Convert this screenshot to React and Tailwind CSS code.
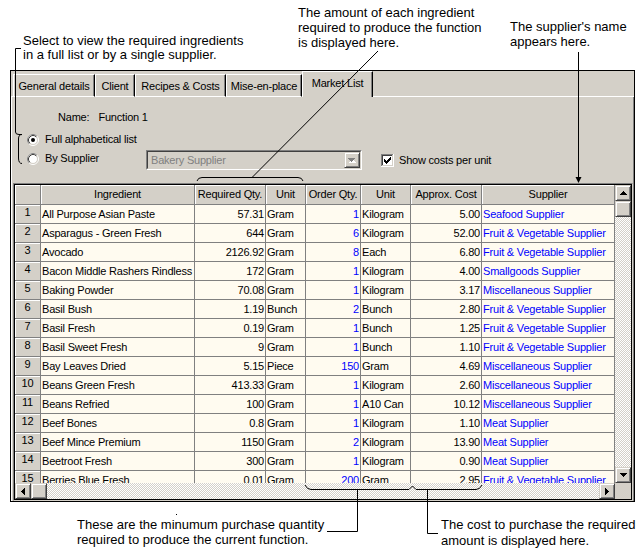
import React from "react";

const rows = [
  [1, "All Purpose Asian Paste", "57.31", "Gram", "1", "Kilogram", "5.00", "Seafood Supplier"],
  [2, "Asparagus - Green Fresh", "644", "Gram", "6", "Kilogram", "52.00", "Fruit & Vegetable Supplier"],
  [3, "Avocado", "2126.92", "Gram", "8", "Each", "6.80", "Fruit & Vegetable Supplier"],
  [4, "Bacon Middle Rashers Rindless", "172", "Gram", "1", "Kilogram", "4.00", "Smallgoods Supplier"],
  [5, "Baking Powder", "70.08", "Gram", "1", "Kilogram", "3.17", "Miscellaneous Supplier"],
  [6, "Basil Bush", "1.19", "Bunch", "2", "Bunch", "2.80", "Fruit & Vegetable Supplier"],
  [7, "Basil Fresh", "0.19", "Gram", "1", "Bunch", "1.25", "Fruit & Vegetable Supplier"],
  [8, "Basil Sweet Fresh", "9", "Gram", "1", "Bunch", "1.10", "Fruit & Vegetable Supplier"],
  [9, "Bay Leaves Dried", "5.15", "Piece", "150", "Gram", "4.69", "Miscellaneous Supplier"],
  [10, "Beans Green Fresh", "413.33", "Gram", "1", "Kilogram", "2.60", "Miscellaneous Supplier"],
  [11, "Beans Refried", "100", "Gram", "1", "A10 Can", "10.12", "Miscellaneous Supplier"],
  [12, "Beef Bones", "0.8", "Gram", "1", "Kilogram", "1.10", "Meat Supplier"],
  [13, "Beef Mince Premium", "1150", "Gram", "2", "Kilogram", "13.90", "Meat Supplier"],
  [14, "Beetroot Fresh", "300", "Gram", "1", "Kilogram", "0.90", "Meat Supplier"],
  [15, "Berries Blue Fresh", "0.01", "Gram", "200", "Gram", "2.95", "Fruit & Vegetable Supplier"],
];

function Arrow({ dir, color = "#000" }) {
  const r = [];
  if (dir === "up" || dir === "down") {
    const spec = [[3, 1], [2, 3], [1, 5], [0, 7]];
    spec.forEach(([x, w], i) => {
      const y = dir === "up" ? i : 3 - i;
      r.push(<rect key={i} x={x} y={y} width={w} height={1} fill={color} />);
    });
    return (
      <svg width="7" height="4" shapeRendering="crispEdges">
        {r}
      </svg>
    );
  }
  const spec = [[3, 1], [2, 3], [1, 5], [0, 7]];
  spec.forEach(([y, h], i) => {
    const x = dir === "left" ? i : 3 - i;
    r.push(<rect key={i} x={x} y={y} width={1} height={h} fill={color} />);
  });
  return (
    <svg width="4" height="7" shapeRendering="crispEdges">
      {r}
    </svg>
  );
}

function Btn({ children }) {
  return (
    <div className="w-[16px] h-[16px] shrink-0 bg-[#d4d0c8] border border-[#d4d0c8] border-r-[#404040] border-b-[#404040] shadow-[inset_1px_1px_#ffffff,inset_-1px_-1px_#808080] flex items-center justify-center">
      {children}
    </div>
  );
}

function Track() {
  return (
    <div className="flex-1 bg-[image:repeating-conic-gradient(#d4d0c8_0_25%,#ffffff_0_50%)] bg-size-[2px_2px]" />
  );
}

function Radio({ checked }) {
  return (
    <svg width="12" height="12" className="shrink-0">
      <circle cx="6" cy="6" r="5.5" fill="none" stroke="#ffffff" />
      <path d="M2.11 9.89 A5.5 5.5 0 0 1 9.89 2.11" fill="none" stroke="#808080" />
      <circle cx="6" cy="6" r="4.5" fill="#ffffff" stroke="#d4d0c8" />
      <path d="M2.82 9.18 A4.5 4.5 0 0 1 9.18 2.82" fill="none" stroke="#404040" />
      {checked && <circle cx="6" cy="6" r="2" fill="#000" />}
    </svg>
  );
}

function Checkbox() {
  const cols = [[3, 5], [4, 6], [5, 7], [6, 6], [7, 5], [8, 4], [9, 3]];
  return (
    <svg width="13" height="13" shapeRendering="crispEdges" className="shrink-0">
      <rect x="0" y="0" width="13" height="13" fill="#ffffff" />
      <rect x="0" y="0" width="12" height="1" fill="#808080" />
      <rect x="0" y="0" width="1" height="12" fill="#808080" />
      <rect x="1" y="1" width="10" height="1" fill="#404040" />
      <rect x="1" y="1" width="1" height="10" fill="#404040" />
      <rect x="1" y="11" width="11" height="1" fill="#d4d0c8" />
      <rect x="11" y="1" width="1" height="11" fill="#d4d0c8" />
      {cols.map(([x, y]) => (
        <rect key={x} x={x} y={y} width="1" height="3" fill="#000" />
      ))}
    </svg>
  );
}

const hdr =
  "h-full shrink-0 bg-[#d4d0c8] border-r border-b border-r-[#808080] border-b-[#808080] shadow-[inset_1px_1px_#ffffff] flex items-center justify-center";
const cell = "h-full shrink-0 border-r border-r-[#808080] flex items-center overflow-hidden whitespace-nowrap";

function Tab({ label, w, selected }) {
  if (selected) {
    return (
      <div
        className={`${w} h-[26px] shrink-0 border-t border-l border-t-white border-l-white border-r border-r-black shadow-[inset_-1px_0_#808080] flex items-center justify-center pb-[2px]`}
      >
        {label}
      </div>
    );
  }
  return (
    <div
      className={`${w} h-[23px] shrink-0 border-t border-l border-t-white border-l-white border-r border-r-black border-b border-b-white shadow-[inset_-1px_0_#808080] flex items-center justify-center pt-[1px]`}
    >
      {label}
    </div>
  );
}

export default function App() {
  return (
    <div className="relative w-[640px] h-[554px] bg-white overflow-hidden font-['Liberation_Sans',Arial,sans-serif] text-black">
      <div className="pt-[70px] pl-[10px]">
        <div className="w-[625px] h-[432px] border border-black bg-[#d4d0c8] flex flex-col text-[11px] tracking-[-0.2px] leading-[13px]">
          {/* tabs */}
          <div className="flex items-end h-[26px]">
            <div className="w-[2px] h-[1px] bg-white shrink-0" />
            <Tab label="General details" w="w-[82px]" />
            <Tab label="Client" w="w-[40px]" />
            <Tab label="Recipes & Costs" w="w-[91px]" />
            <Tab label="Mise-en-place" w="w-[76px]" />
            <Tab label="Market List" w="w-[71px]" selected />
            <div className="flex-1 h-[1px] bg-white" />
          </div>
          {/* page */}
          <div className="flex-1 border-l border-l-white border-r border-r-[#808080] flex flex-col">
            <div className="mt-[14px] h-[13px] flex items-center pl-[46px]">
              <span>Name:</span>
              <span className="ml-[9px]">Function 1</span>
            </div>
            <div className="mt-[9px] h-[13px] flex items-center pl-[15px]">
              <Radio checked />
              <span className="ml-[6px]">Full alphabetical list</span>
            </div>
            <div className="mt-[4px] h-[20px] flex items-center pl-[15px]">
              <div className="w-[119px] flex items-center mt-[-3px]">
                <Radio />
                <span className="ml-[6px]">By Supplier</span>
              </div>
              <div className="w-[216px] h-[20px] border border-t-[#808080] border-l-[#808080] border-r-white border-b-white">
                <div className="h-full border border-t-[#404040] border-l-[#404040] border-r-[#d4d0c8] border-b-[#d4d0c8] flex items-center bg-[#d4d0c8]">
                  <span className="flex-1 pl-[3px] text-[#808080] pt-[1px]">Bakery Supplier</span>
                  <div className="w-[16px] h-[16px] shrink-0 bg-[#d4d0c8] border border-[#d4d0c8] border-r-[#404040] border-b-[#404040] shadow-[inset_1px_1px_#ffffff,inset_-1px_-1px_#808080] flex items-center justify-center">
                    <svg width="8" height="5" shapeRendering="crispEdges">
                      <rect x="4" y="1" width="1" height="1" fill="#fff" />
                      <rect x="3" y="2" width="3" height="1" fill="#fff" />
                      <rect x="2" y="3" width="5" height="1" fill="#fff" />
                      <rect x="1" y="4" width="7" height="1" fill="#fff" />
                      <rect x="0" y="0" width="7" height="1" fill="#808080" />
                      <rect x="1" y="1" width="5" height="1" fill="#808080" />
                      <rect x="2" y="2" width="3" height="1" fill="#808080" />
                      <rect x="3" y="3" width="1" height="1" fill="#808080" />
                    </svg>
                  </div>
                </div>
              </div>
              <div className="ml-[19px] flex items-center">
                <Checkbox />
                <span className="ml-[5px]">Show costs per unit</span>
              </div>
            </div>
            {/* grid */}
            <div className="mt-[13px] ml-[1px] w-[620px] h-[318px] border border-t-[#808080] border-l-[#808080] border-r-[#d4d0c8] border-b-[#d4d0c8]">
              <div className="h-full border border-black flex flex-col">
                <div className="flex h-[298px]">
                  <div className="w-[600px] flex flex-col">
                    <div className="flex h-[20px]">
                      <div className={`${hdr} w-[26px]`} />
                      <div className={`${hdr} w-[154px]`}>Ingredient</div>
                      <div className={`${hdr} w-[71px]`}>Required Qty.</div>
                      <div className={`${hdr} w-[40px]`}>Unit</div>
                      <div className={`${hdr} w-[55px]`}>Order Qty.</div>
                      <div className={`${hdr} w-[50px]`}>Unit</div>
                      <div className={`${hdr} w-[71px]`}>Approx. Cost</div>
                      <div className={`${hdr} w-[133px]`}>Supplier</div>
                    </div>
                    <div className="h-[278px] overflow-hidden bg-[#fffbf0]">
                      {rows.map((r) => (
                        <div key={r[0]} className="flex h-[19px] border-b border-b-[#808080]">
                          <div className={`${cell} w-[26px] bg-[#d4d0c8] shadow-[inset_1px_1px_#ffffff] justify-center pb-[3px]`}>
                            {r[0]}
                          </div>
                          <div className={`${cell} w-[154px] pl-[1px]`}>{r[1]}</div>
                          <div className={`${cell} w-[71px] justify-end pr-[1px]`}>{r[2]}</div>
                          <div className={`${cell} w-[40px] pl-[1px]`}>{r[3]}</div>
                          <div className={`${cell} w-[55px] justify-end pr-[1px] text-[#0000ff]`}>{r[4]}</div>
                          <div className={`${cell} w-[50px] pl-[1px]`}>{r[5]}</div>
                          <div className={`${cell} w-[71px] justify-end pr-[1px]`}>{r[6]}</div>
                          <div className={`${cell} w-[133px] pl-[1px] text-[#0000ff]`}>{r[7]}</div>
                        </div>
                      ))}
                    </div>
                  </div>
                  <div className="w-[16px] flex flex-col">
                    <Btn>
                      <Arrow dir="up" />
                    </Btn>
                    <Btn />
                    <Track />
                    <Btn>
                      <Arrow dir="down" />
                    </Btn>
                  </div>
                </div>
                <div className="flex h-[16px]">
                  <div className="w-[600px] flex">
                    <Btn>
                      <Arrow dir="left" />
                    </Btn>
                    <Btn />
                    <Track />
                    <Btn>
                      <Arrow dir="right" />
                    </Btn>
                  </div>
                  <div className="w-[16px] h-[16px] bg-[#d4d0c8]" />
                </div>
              </div>
            </div>
          </div>
        </div>
      </div>

      {/* annotation callouts */}
      <div className="absolute left-[23px] top-[34px] text-[13px] leading-[14px] whitespace-nowrap">
        <div>Select to view the required ingredients</div>
        <div>in a full list or by a single supplier.</div>
      </div>
      <div className="absolute left-[298px] top-[5px] text-[13px] leading-[15px] whitespace-nowrap">
        <div>The amount of each ingredient</div>
        <div>required to produce the function</div>
        <div>is displayed here.</div>
      </div>
      <div className="absolute left-[510px] top-[19px] text-[13px] leading-[15px] whitespace-nowrap">
        <div>The supplier's name</div>
        <div>appears here.</div>
      </div>
      <div className="absolute left-[77px] top-[517px] text-[13px] leading-[15px] whitespace-nowrap">
        <div>These are the minumum purchase quantity</div>
        <div>required to produce the current function.</div>
      </div>
      <div className="absolute left-[441px] top-[517px] text-[13px] leading-[16px] whitespace-nowrap">
        <div>The cost to purchase the required</div>
        <div>amount is displayed here.</div>
      </div>

      <svg className="absolute left-0 top-0 pointer-events-none" width="640" height="554">
        <g fill="none" stroke="#000" strokeWidth="1">
          <path d="M21 48.5 H15.5 V132 Q15.5 134.5 19 134.5 H22" />
          <path d="M22 134.5 Q18.5 134.5 18.5 139 V158 Q18.5 163.5 22 163.5" />
          <path d="M378 51 L252 177.5" />
          <path d="M197 181 Q198 177.5 202 177.5 H298 Q302 177.5 303 181" />
          <path d="M578.5 52 V178" />
          <path d="M305 485 Q307 489.5 311 489.5 H409 L412.5 486 L416 489.5 H476 Q480 489.5 482 485" />
          <path d="M357.5 489.5 V531.5 H327" />
          <path d="M427.5 489.5 V533.5 H438" />
        </g>
        <polygon points="575.5,177 581.5,177 578.5,183" fill="#000" />
        <rect x="176" y="514" width="1" height="1" fill="#000" />
      </svg>
    </div>
  );
}
